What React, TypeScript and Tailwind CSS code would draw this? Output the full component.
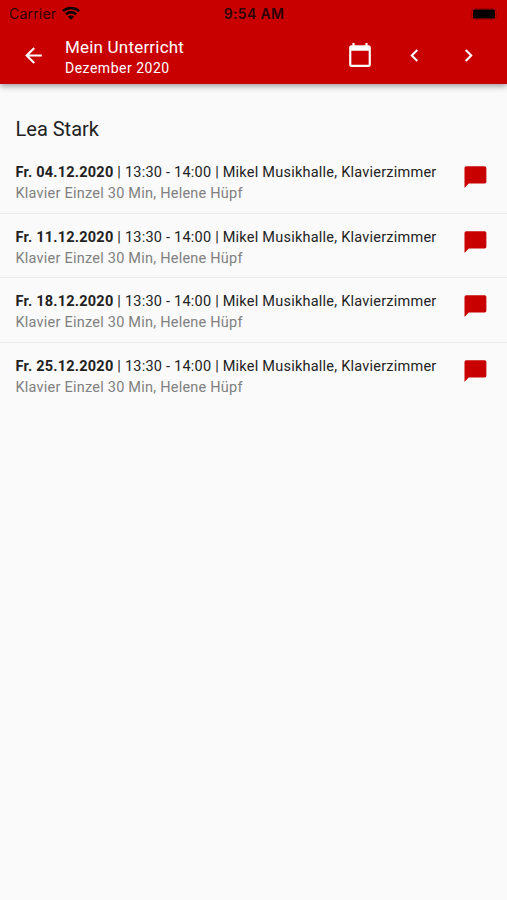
import { MdArrowBack, MdCalendarToday, MdChevronLeft, MdChevronRight } from "react-icons/md";

const lessons = ["04.12.2020", "11.12.2020", "18.12.2020", "25.12.2020"];

function StatusBar() {
  return (
    <div className="flex h-[27px] items-center justify-between pr-[6px] pl-[9px] text-black/80">
      <div className="flex w-[118px] items-center gap-[6px]">
        <span className="font-['Inter'] text-[14px] leading-none tracking-[0.2px]">Carrier</span>
        <svg viewBox="0 0 18 14" className="mb-[2px] h-[14px] w-[18px]" fill="none" stroke="black" strokeWidth="2.5">
          <path d="M1 5.2a11.5 11.5 0 0 1 16 0" />
          <path d="M3.9 8.4a7.3 7.3 0 0 1 10.2 0" />
          <path d="M9 13.8 5.9 10.7a4.4 4.4 0 0 1 6.2 0z" fill="black" stroke="none" />
        </svg>
      </div>
      <span className="pt-px font-['Inter'] text-[14px] leading-none font-semibold tracking-[0.35px]">9:54 AM</span>
      <div className="flex w-[120px] justify-end">
        <svg viewBox="0 0 30 12" className="h-[12px] w-[30px]">
          <rect x="0.5" y="0.5" width="25" height="11" rx="3" fill="none" stroke="#a00000" />
          <rect x="2" y="1.5" width="22" height="9" rx="1.5" fill="black" />
          <path d="M27 4.2c1.6.6 1.6 3 0 3.6z" fill="#a00000" />
        </svg>
      </div>
    </div>
  );
}

function Header() {
  return (
    <header className="h-[84px] bg-[#c80000] text-white shadow-[0_2px_6px_rgba(0,0,0,0.4)]">
      <StatusBar />
      <div className="flex h-[56px] items-center pr-[26px] pl-[21px]">
        <MdArrowBack size={25} />
        <div className="ml-[19px] flex-1 pt-[4px]">
          <h1 className="text-[17px] leading-[21px] tracking-[0.2px]">Mein Unterricht</h1>
          <p className="text-[14px] leading-[20px] tracking-[0.5px]">Dezember 2020</p>
        </div>
        <MdCalendarToday size={26} />
        <MdChevronLeft size={25} className="ml-[29.5px]" />
        <MdChevronRight size={25} className="ml-[29px]" />
      </div>
    </header>
  );
}

function LessonRow({ date }: { date: string }) {
  return (
    <li className="flex h-[64.75px] items-start justify-between border-b border-[#ececec] pt-[13px] pr-[19px] pl-[15.5px] last:border-0">
      <div className="text-[14.5px] leading-[21px] tracking-[0.23px] whitespace-nowrap">
        <p className="text-[#222]">
          <b>Fr. {date}</b> | 13:30 - 14:00 | Mikel Musikhalle, Klavierzimmer
        </p>
        <p className="text-[#808080]">Klavier Einzel 30 Min, Helene Hüpf</p>
      </div>
      <svg viewBox="0 0 24 24" className="mt-[2px] h-[26px] w-[26px]" fill="#c80000">
        <path d="M20.8 2H4c-1.1 0-1.7.8-1.7 1.8v18.4L6.2 18h14.6c1.1 0 1.7-.8 1.7-1.8V3.8c0-1-.6-1.8-1.7-1.8z" />
      </svg>
    </li>
  );
}

export default function App() {
  return (
    <div className="h-[900px] w-[507px] overflow-hidden bg-[#fafafa] font-['Roboto',sans-serif]">
      <Header />
      <main>
        <h2 className="h-[64.75px] pt-[31px] pl-[15.5px] text-[20px] leading-[28px] text-[#222]">Lea Stark</h2>
        <ul>
          {lessons.map((date) => (
            <LessonRow key={date} date={date} />
          ))}
        </ul>
      </main>
    </div>
  );
}
